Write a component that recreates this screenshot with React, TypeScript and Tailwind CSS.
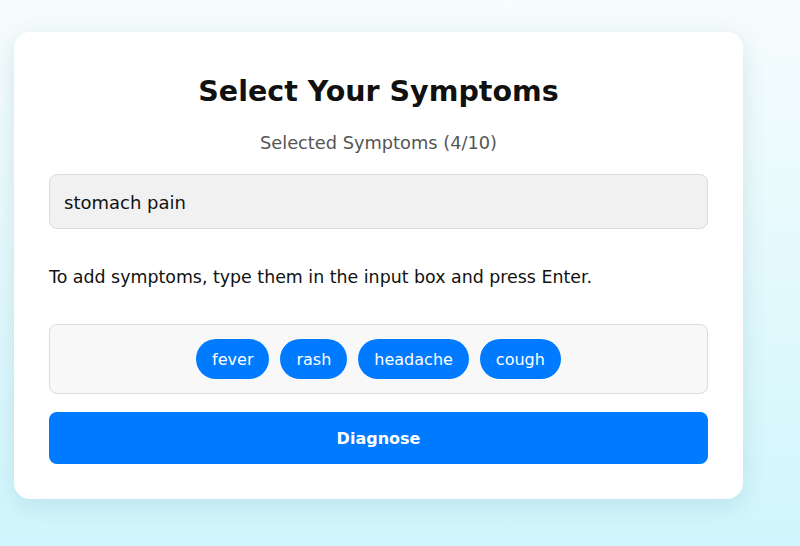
const tags = ['fever', 'rash', 'headache', 'cough'];

export default function App() {
  return (
    <div
      className="min-h-[546px] w-full bg-gradient-to-b from-[#f7fcfd] to-[#cff6fc] pt-[32px] pl-[14px]"
      style={{ fontFamily: '"DejaVu Sans", sans-serif' }}
    >
      <div className="w-[729px] rounded-2xl bg-white px-[35px] pt-[40px] pb-[35px] shadow-[0_6px_24px_rgba(0,80,100,0.12)]">
        <h2 className="text-center text-[28.5px] leading-[40px] font-bold text-[#111]">Select Your Symptoms</h2>
        <p className="mt-[19px] text-center text-[17.8px] leading-[24px] text-[#555]">Selected Symptoms (4/10)</p>

        {/* Input */}
        <div className="mt-[19px] flex h-[55px] items-center rounded-lg border border-[#dcdcdc] bg-[#f1f1f1] px-[14px] pt-[1px] text-[18px] text-[#111]">
          stomach pain
        </div>

        <p className="mt-[36px] text-[17.4px] leading-[24px] text-[#111]">
          To add symptoms, type them in the input box and press Enter.
        </p>

        {/* Selected tags */}
        <div className="mt-[35px] flex h-[70px] items-center justify-center gap-[11px] rounded-lg border border-[#dcdcdc] bg-[#f8f8f8]">
          {tags.map((t) => (
            <span
              key={t}
              className="flex h-[40px] items-center rounded-full bg-[#007bff] px-[16px] pt-[2px] text-[16px] text-white"
            >
              {t}
            </span>
          ))}
        </div>

        <button className="mt-[18px] flex h-[52px] w-full items-center justify-center rounded-lg bg-[#007bff] pt-[1px] text-[16px] font-bold text-white">
          Diagnose
        </button>
      </div>
    </div>
  );
}
